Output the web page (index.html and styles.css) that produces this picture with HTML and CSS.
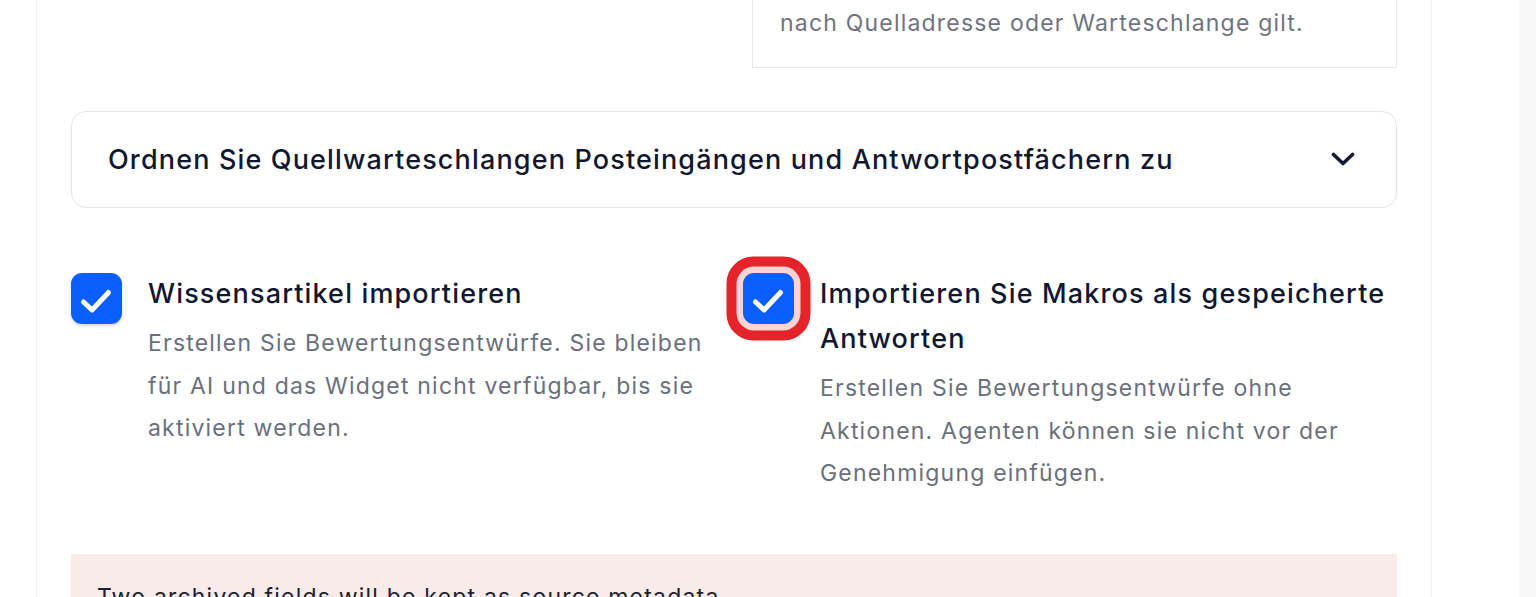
FILE: index.html
```html
<!DOCTYPE html>
<html lang="de">
<head>
<meta charset="utf-8">
<title>Import</title>
<link rel="stylesheet" href="styles.css">
</head>
<body>
<div class="page">
  <main class="card">
    <div class="top-grid">
      <div></div>
      <div class="note">Legen Sie fest, welche Regel<br>nach Quelladresse oder Warteschlange gilt.</div>
    </div>

    <button class="accordion" type="button">
      <span class="accordion-title">Ordnen Sie Quellwarteschlangen Posteingängen und Antwortpostfächern zu</span>
      <svg class="chevron" width="24" height="15" viewBox="0 0 24 15" aria-hidden="true">
        <path d="M2.5 2.5 L12 11.5 L21.5 2.5" fill="none" stroke="#141a31" stroke-width="3.6" stroke-linecap="round" stroke-linejoin="round"/>
      </svg>
    </button>

    <div class="options">
      <label class="option">
        <span class="check">
          <svg width="51" height="51" viewBox="0 0 51 51" aria-hidden="true">
            <path d="M12.5 29 L21 37 L37.5 19.5" fill="none" stroke="#fff" stroke-width="5" stroke-linecap="round" stroke-linejoin="round"/>
          </svg>
        </span>
        <span class="option-text">
          <span class="option-title">Wissensartikel importieren</span>
          <span class="option-desc">Erstellen Sie Bewertungsentwürfe. Sie bleiben für AI und das Widget nicht verfügbar, bis sie aktiviert werden.</span>
        </span>
      </label>
      <label class="option">
        <span class="check check-focus">
          <svg width="51" height="51" viewBox="0 0 51 51" aria-hidden="true">
            <path d="M12.5 29 L21 37 L37.5 19.5" fill="none" stroke="#fff" stroke-width="5" stroke-linecap="round" stroke-linejoin="round"/>
          </svg>
        </span>
        <span class="option-text">
          <span class="option-title">Importieren Sie Makros als gespeicherte Antworten</span>
          <span class="option-desc">Erstellen Sie Bewertungsentwürfe ohne Aktionen. Agenten können sie nicht vor der Genehmigung einfügen.</span>
        </span>
      </label>
    </div>

    <div class="alert">Two archived fields will be kept as source metadata.</div>
  </main>
  <div class="rail"></div>
</div>
</body>
</html>
```

FILE: styles.css
```css
html, body {
  margin: 0;
  padding: 0;
  background: #ffffff;
  font-family: Inter, "Noto Sans", "Liberation Sans", sans-serif;
}

.page {
  display: flex;
  height: 100vh;
  overflow: hidden;
}

.card {
  box-sizing: border-box;
  width: 1396px;
  margin-left: 36px;
  padding: 0 34px;
  border-left: 1px solid #f0f1f3;
  border-right: 1px solid #f0f1f3;
  flex: none;
}

.rail {
  margin-left: auto;
  width: 17px;
  background: #f8f8f9;
  flex: none;
}

.top-grid {
  display: grid;
  grid-template-columns: 1fr 1fr;
  column-gap: 36px;
  margin-top: -64px;
}

.note {
  border: 1.5px solid #e4e6ea;
  padding: 22px 20px 22px 27px;
  font-size: 23px;
  letter-spacing: 1.2px;
  line-height: 43px;
  color: #6f7380;
  white-space: nowrap;
}

.accordion {
  box-sizing: border-box;
  display: flex;
  align-items: center;
  justify-content: space-between;
  width: 100%;
  height: 97px;
  margin-top: 43px;
  padding: 0 41px 0 36px;
  background: #ffffff;
  border: 1.5px solid #e3e5e9;
  border-radius: 15px;
  font-family: inherit;
  cursor: pointer;
}

.accordion-title {
  font-size: 27px;
  font-weight: 500;
  letter-spacing: 1.15px;
  color: #111730;
}

.chevron {
  display: block;
  flex: none;
}

.options {
  display: grid;
  grid-template-columns: 1fr 1fr;
  column-gap: 18px;
  margin-top: 63px;
}

.option {
  display: flex;
  align-items: flex-start;
  gap: 26px;
}

.check {
  flex: none;
  width: 51px;
  height: 51px;
  margin-top: 2px;
  border-radius: 11px;
  background: #0b5eff;
  box-shadow: 0 2px 3px rgba(16, 40, 90, 0.18);
}

.check svg {
  display: block;
}

.check-focus {
  box-shadow: 0 0 0 6.5px #fcd4d4, 0 0 0 16.5px #e4232b;
}

.option-text {
  display: flex;
  flex-direction: column;
  gap: 6px;
}

.option-title {
  font-size: 27px;
  letter-spacing: 1.15px;
  line-height: 45px;
  font-weight: 500;
  color: #111730;
}

.option-desc {
  font-size: 23px;
  letter-spacing: 1.2px;
  line-height: 42.5px;
  color: #6b6f7c;
}

.alert {
  margin-top: 59px;
  padding: 27px 26px;
  background: #f9ece8;
  font-size: 23px;
  letter-spacing: 1.2px;
  line-height: 33px;
  color: #1c2133;
}
```
